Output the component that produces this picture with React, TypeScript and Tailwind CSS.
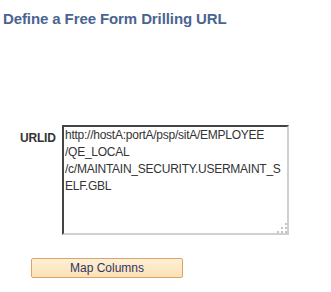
import React from 'react';

const App = () => {
  return (
    <div className="w-[331px] h-[292px] bg-white" style={{ fontFamily: '"Liberation Sans", Arial, sans-serif' }}>
      <h1 className="pt-[10px] pl-[3px] text-[15px] leading-[18px] font-bold text-[#4a6491] tracking-[-0.1px]">
        Define a Free Form Drilling URL
      </h1>

      <div className="flex items-start mt-[97px] pl-[20px]">
        <label className="w-[42px] mt-[6px] text-[12px] leading-[14px] font-bold text-[#333333] tracking-[-0.2px]">URLID</label>
        <div className="relative">
          <textarea
            readOnly
            wrap="off"
            className="block w-[227px] h-[110px] resize-none overflow-hidden border-2 border-t-[#444] border-l-[#444] border-r-[#d0d0d0] border-b-[#d0d0d0] pl-[1px] pt-0 text-[12px] leading-[17px] tracking-[-0.25px] text-[#333] outline-none"
            defaultValue={'http://hostA:portA/psp/sitA/EMPLOYEE\n/QE_LOCAL\n/c/MAINTAIN_SECURITY.USERMAINT_S\nELF.GBL'}
          />
          <svg className="absolute right-[2px] bottom-[2px]" width="10" height="10" viewBox="0 0 10 10">
            <rect x="8" y="0" width="2" height="2" fill="#c4c4c4" />
            <rect x="4" y="4" width="2" height="2" fill="#c4c4c4" />
            <rect x="8" y="4" width="2" height="2" fill="#c4c4c4" />
            <rect x="0" y="8" width="2" height="2" fill="#c4c4c4" />
            <rect x="4" y="8" width="2" height="2" fill="#c4c4c4" />
            <rect x="8" y="8" width="2" height="2" fill="#c4c4c4" />
          </svg>
        </div>
      </div>

      <div className="mt-[23px] pl-[31px]">
        <button className="block w-[152px] h-[20px] border border-[#e0a06a] rounded-[2px] bg-gradient-to-b from-[#fdf0d5] to-[#fbe2b4] text-[12px] leading-[18px] text-[#333366]">
          Map Columns
        </button>
      </div>
    </div>
  );
};

export default App;
